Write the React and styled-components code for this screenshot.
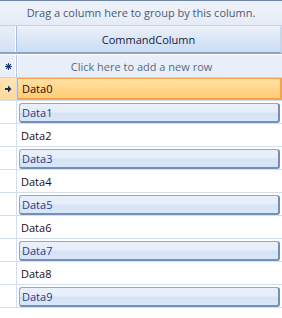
import React from "react";
import styled, { createGlobalStyle } from "styled-components";

const Global = createGlobalStyle`
  html, body { margin: 0; padding: 0; background: #ffffff; }
  body { font-family: "Open Sans", "Liberation Sans", sans-serif; font-size: 11px; }
`;

const Grid = styled.div`
  width: 282px;
  height: 318px;
  background: #ffffff;
  border-top: 1px solid #6f86a8;
  box-sizing: border-box;
  overflow: hidden;
`;

const GroupPanel = styled.div`
  height: 25px;
  box-sizing: border-box;
  background: linear-gradient(#eef2fa, #e6ecf7);
  border-bottom: 1px solid #c3d2e8;
  display: flex;
  align-items: center;
  justify-content: center;
  color: #4b5b74;
  padding-bottom: 1px;
`;

const Row = styled.div`
  display: grid;
  grid-template-columns: 17px 1fr;
  height: ${(p) => p.$h}px;
  box-sizing: border-box;
`;

const HeaderIndicator = styled.div`
  background: linear-gradient(#e8eff9, #d3e1f4);
  border-right: 1px solid #a9bdd8;
  border-bottom: 2px solid #8aa4c8;
  box-shadow: inset -1px 0 0 #ffffff;
`;

const HeaderCell = styled.div`
  background: linear-gradient(#eaf1fa 0%, #dde8f7 40%, #cbdcf3 100%);
  border-top: 1px solid #f4f4fb;
  border-right: 2px solid #c8d6ea;
  border-bottom: 2px solid #8aa4c8;
  display: flex;
  align-items: center;
  justify-content: center;
  color: #14223a;
`;

const NewRowWrap = styled.div`
  display: grid;
  grid-template-columns: 17px 1fr;
  height: 24px;
  box-sizing: border-box;
  background: #e9eff9;
  border-top: 1px solid #ffffff;
  border-bottom: 1px solid #c6d5ea;
`;

const NewIndicator = styled.div`
  display: flex;
  align-items: center;
  justify-content: center;
  border-right: 1px solid #b4c6e0;
  box-shadow: inset -1px 0 0 #ffffff;
`;

const NewText = styled.div`
  display: flex;
  align-items: center;
  justify-content: center;
  padding-right: 17px;
  color: #5b6a80;
  border-left: 1px solid #ffffff;
`;

const DataRow = styled.div`
  display: grid;
  grid-template-columns: 17px 1fr;
  height: 23px;
  box-sizing: border-box;
  border-bottom: 1px solid #d3dff0;
`;

const Indicator = styled.div`
  display: flex;
  align-items: center;
  justify-content: center;
  border-right: 1px solid #d3dff0;
  background: ${(p) => (p.$active ? "linear-gradient(#ffe6b4, #ffd898)" : "#ffffff")};
`;

const Cell = styled.div`
  display: flex;
  align-items: center;
  padding: 0 0 0 4px;
  color: #1c0a14;
  ${(p) =>
    p.$active &&
    `
    background: linear-gradient(#ffe1a4 0%, #ffd68c 50%, #ffcb74 100%);
    border: 1px solid #f7a24f;
    border-bottom-width: 2px;
    border-right-width: 2px;
  `}
`;

const BoxCell = styled.div`
  display: flex;
  padding: 2px 2px 0 2px;
`;

const Box = styled.div`
  flex: 1;
  height: 20px;
  box-sizing: border-box;
  border: 1px solid #91a9cc;
  border-right-color: #7190bb;
  border-bottom-color: #7190bb;
  border-right-width: 2px;
  border-bottom-width: 2px;
  border-radius: 3px;
  background: linear-gradient(#e9f0fb 0%, #e6eefa 48%, #d6e3f5 52%, #dae6f7 100%);
  color: #1f3d8c;
  display: flex;
  align-items: center;
  padding-left: 2px;
`;

const Arrow = () => (
  <svg width="8" height="8" viewBox="0 0 8 8">
    <path d="M1 3 H4 V0.5 L7.5 4 L4 7.5 V5 H1 Z" fill="#15305f" />
  </svg>
);

const Star = () => (
  <svg width="9" height="9" viewBox="0 0 9 9">
    <g stroke="#ffffff" strokeWidth="2.6" strokeLinecap="round">
      <line x1="4.5" y1="1" x2="4.5" y2="8" />
      <line x1="1" y1="4.5" x2="8" y2="4.5" />
      <line x1="2" y1="2" x2="7" y2="7" />
      <line x1="7" y1="2" x2="2" y2="7" />
    </g>
    <g stroke="#1e3f7a" strokeWidth="1.1">
      <line x1="4.5" y1="1" x2="4.5" y2="8" />
      <line x1="1" y1="4.5" x2="8" y2="4.5" />
      <line x1="2" y1="2" x2="7" y2="7" />
      <line x1="7" y1="2" x2="2" y2="7" />
    </g>
  </svg>
);

const rows = Array.from({ length: 10 }, (_, i) => `Data${i}`);

export default function App() {
  return (
    <>
      <Global />
      <Grid>
        <GroupPanel>Drag a column here to group by this column.</GroupPanel>
        <Row $h={28}>
          <HeaderIndicator />
          <HeaderCell>CommandColumn</HeaderCell>
        </Row>
        <NewRowWrap>
          <NewIndicator>
            <Star />
          </NewIndicator>
          <NewText>Click here to add a new row</NewText>
        </NewRowWrap>
        {rows.map((r, i) => {
          const active = i === 0;
          const boxed = i % 2 === 1;
          return (
            <DataRow key={r}>
              <Indicator $active={active}>{active && <Arrow />}</Indicator>
              {boxed ? (
                <BoxCell>
                  <Box>{r}</Box>
                </BoxCell>
              ) : (
                <Cell $active={active}>{r}</Cell>
              )}
            </DataRow>
          );
        })}
      </Grid>
    </>
  );
}
